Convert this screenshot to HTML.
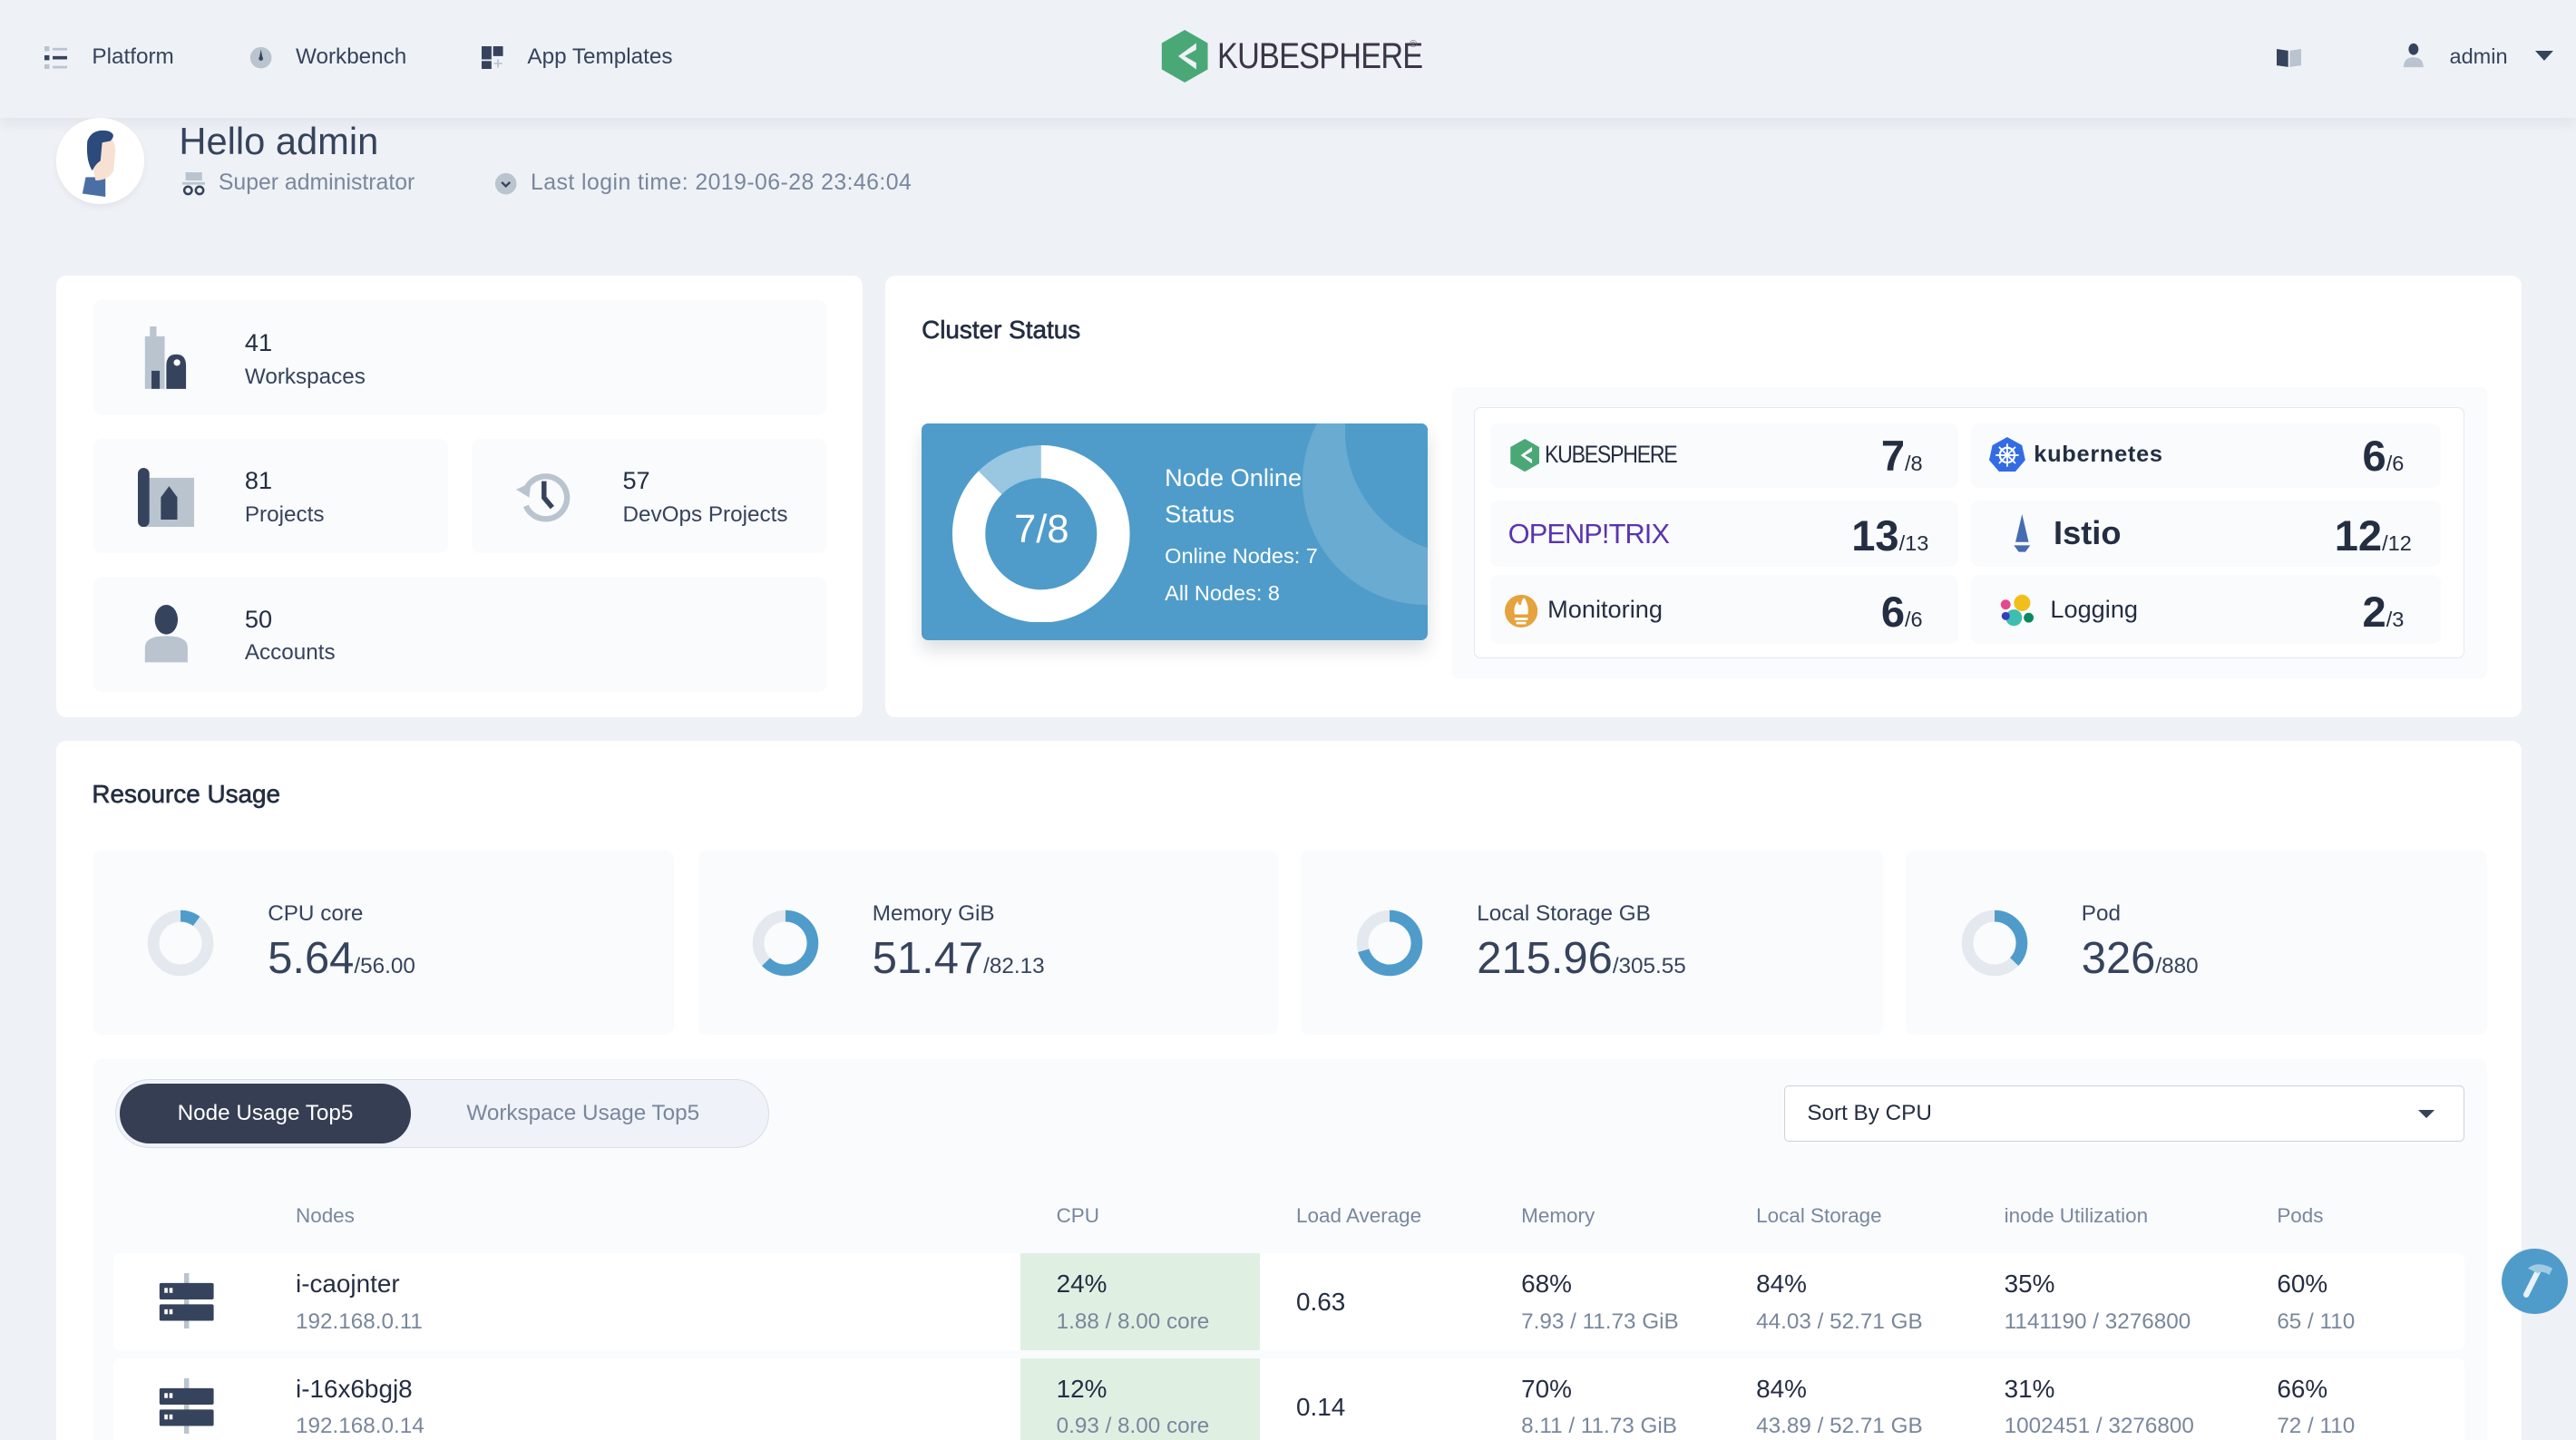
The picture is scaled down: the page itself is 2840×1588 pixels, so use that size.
<!DOCTYPE html>
<html><head><meta charset="utf-8">
<style>
*{box-sizing:border-box;margin:0;padding:0}
html,body{width:2840px;height:1588px;overflow:hidden;background:#eef1f6}
#root{zoom:1.8112;width:1568px;height:877px;position:relative;font-family:"Liberation Sans",sans-serif;color:#242e42;overflow:hidden}
.a{position:absolute}
.hdr{left:0;top:0;width:1568px;height:72px;background:#eef1f6;box-shadow:0 4px 8px rgba(36,46,66,.06)}
.nav{font-size:13.4px;color:#36435c;top:27px}
.card{background:#fff;border-radius:6px}
.tile{background:#f9fbfd;border-radius:5px}
.num{font-size:15px;color:#242e42}
.lbl{font-size:13.4px;color:#36435c}
.big{font-size:26px;color:#242e42;font-weight:bold}
.sm{font-size:13px;font-weight:normal}
.th{font-size:12.4px;color:#79879c;top:733px}
.v{font-size:15.4px;color:#242e42}
.s{font-size:13.4px;color:#79879c}
.ttl{font-size:15.4px;color:#242e42;-webkit-text-stroke:.35px #242e42}
</style></head><body><div id="root">
<div class="a hdr"></div>
<svg class="a" style="left:27px;top:28px" width="14" height="14" viewBox="0 0 14 14"><rect x="0" y="0" width="3" height="3" fill="#b9c4cf"/><rect x="5" y="1" width="9" height="1.5" fill="#b9c4cf"/><rect x="0" y="5.5" width="3" height="3" fill="#36435c"/><rect x="5" y="6" width="9" height="2" fill="#36435c"/><rect x="0" y="11" width="3" height="3" fill="#b9c4cf"/><rect x="5" y="12" width="9" height="1.5" fill="#b9c4cf"/></svg>
<div class="a nav" style="left:56px">Platform</div>
<svg class="a" style="left:152px;top:28px" width="14" height="14" viewBox="0 0 14 14"><circle cx="7" cy="7" r="6.5" fill="#b9c4cf"/><path d="M7 2 L8 7 L6 7Z" fill="#36435c"/><circle cx="7" cy="7.5" r="1.3" fill="#36435c"/></svg>
<div class="a nav" style="left:180px">Workbench</div>
<svg class="a" style="left:293px;top:28px" width="14" height="14" viewBox="0 0 14 14"><rect x="0" y="0" width="6" height="8" fill="#36435c"/><rect x="7" y="0" width="6" height="6" fill="#36435c"/><rect x="0" y="9" width="6" height="5" fill="#36435c"/><path d="M10 8v5M7.5 10.5h5" stroke="#b9c4cf" stroke-width="1"/></svg>
<div class="a nav" style="left:321px">App Templates</div>
<svg class="a" style="left:706px;top:18px" width="30" height="32" viewBox="0 0 30 32"><path d="M15 0 L29 8 L29 24 L15 32 L1 24 L1 8Z" fill="#4aa877"/><path d="M11 16 L22 8 L22 12 L15 16 L22 20 L22 24Z" fill="#eef1f6"/></svg>
<div class="a" style="left:741px;top:22px;font-size:22px;color:#3b3648;letter-spacing:-0.5px;transform:scaleX(.86);transform-origin:0 0;white-space:nowrap">KUBESPHERE</div>
<div class="a" style="left:858px;top:24px;font-size:6px;color:#666">®</div>
<svg class="a" style="left:1386px;top:30px" width="15" height="11" viewBox="0 0 15 11"><path d="M0 0 L7 1 L7 11 L0 10Z" fill="#36435c"/><path d="M8 1 L15 0 L15 10 L8 11Z" fill="#b9c4cf"/></svg>
<svg class="a" style="left:1463px;top:26px" width="12" height="16" viewBox="0 0 12 16"><ellipse cx="6" cy="4" rx="3" ry="3.5" fill="#36435c"/><path d="M0 15 Q0 9 6 9 Q12 9 12 15Z" fill="#b9c4cf"/></svg>
<div class="a" style="left:1491px;top:27px;font-size:13px;color:#36435c">admin</div>
<svg class="a" style="left:1543px;top:31px" width="11" height="6"><path d="M0 0h11L5.5 6Z" fill="#36435c"/></svg>
<div class="a" style="left:34px;top:72px;width:54px;height:52px;border-radius:50%;background:#fff;box-shadow:0 2px 4px rgba(0,0,0,.05)"></div>
<svg class="a" style="left:44px;top:78px" width="34" height="42" viewBox="0 0 34 42"><path d="M8 30 L20 30 L20 42 L6 40Z" fill="#4a6fa5"/><path d="M10 12 Q10 4 18 4 Q26 5 26 14 L25 26 Q22 32 14 32 L12 22Z" fill="#f6e1d3"/><path d="M9 8 Q12 0 22 2 Q27 4 23 8 L18 9 L17 20 Q14 22 12 26 Q8 20 9 8Z" fill="#2c4a7c"/></svg>
<div class="a" style="left:109px;top:73px;font-size:23px;color:#36435c">Hello admin</div>
<svg class="a" style="left:111px;top:105px" width="14" height="14" viewBox="0 0 14 14"><rect x="2" y="0" width="10" height="5" fill="#b9c4cf"/><rect x="0" y="6" width="14" height="1.5" fill="#b9c4cf"/><circle cx="3.5" cy="11" r="2.3" fill="none" stroke="#36435c" stroke-width="1.4"/><circle cx="10.5" cy="11" r="2.3" fill="none" stroke="#36435c" stroke-width="1.4"/></svg>
<div class="a" style="left:133px;top:104px;font-size:13.7px;color:#79879c">Super administrator</div>
<svg class="a" style="left:301px;top:105px" width="14" height="14"><circle cx="7" cy="7" r="6.5" fill="#b9c4cf"/><path d="M4.5 6 L7 8.5 L9.5 6" stroke="#36435c" stroke-width="1.3" fill="none"/></svg>
<div class="a" style="left:323px;top:104px;font-size:13.7px;color:#79879c;letter-spacing:.25px">Last login time: 2019-06-28 23:46:04</div>

<div class="a card" style="left:34px;top:168px;width:491px;height:269px"></div>
<div class="a tile" style="left:57px;top:183px;width:446px;height:70px"></div>
<div class="a tile" style="left:57px;top:267px;width:216px;height:70px"></div>
<div class="a tile" style="left:287px;top:267px;width:216px;height:70px"></div>
<div class="a tile" style="left:57px;top:351px;width:446px;height:70px"></div>
<svg class="a" style="left:87px;top:199px" width="28" height="40" viewBox="0 0 28 40"><rect x="4" y="0" width="4" height="6" fill="#b9c4cf"/><rect x="1" y="6" width="12" height="32" fill="#b9c4cf"/><rect x="5" y="27" width="5" height="11" fill="#36435c"/><path d="M14 38 L14 24 Q14 17 20 17 Q26 17 26 24 L26 38Z" fill="#36435c"/><circle cx="20.5" cy="22" r="2" fill="#fff"/></svg>
<div class="a num" style="left:149px;top:200px">41</div><div class="a lbl" style="left:149px;top:222px">Workspaces</div>
<svg class="a" style="left:84px;top:285px" width="34" height="36" viewBox="0 0 34 36"><rect x="3" y="6" width="32" height="30" fill="#b9c4cf"/><rect x="0" y="0" width="7" height="36" rx="3.5" fill="#36435c"/><path d="M14 14 L19 6 L24 14 L24 30 L14 30Z" transform="translate(0,6) scale(1,0.85)" fill="#36435c"/></svg>
<div class="a num" style="left:149px;top:284px">81</div><div class="a lbl" style="left:149px;top:306px">Projects</div>
<svg class="a" style="left:314px;top:286px" width="34" height="34" viewBox="0 0 34 34"><path d="M6 12 A13 13 0 1 1 6 22" stroke="#b9c4cf" stroke-width="3.5" fill="none"/><path d="M0 12 L9 8 L8 17Z" fill="#b9c4cf"/><path d="M17 7 L17 17 L22 23" stroke="#36435c" stroke-width="3" fill="none"/></svg>
<div class="a num" style="left:379px;top:284px">57</div><div class="a lbl" style="left:379px;top:306px">DevOps Projects</div>
<svg class="a" style="left:87px;top:368px" width="28" height="36" viewBox="0 0 28 36"><ellipse cx="14" cy="9" rx="7" ry="9" fill="#36435c"/><path d="M1 35 L1 26 Q1 19 14 19 Q27 19 27 26 L27 35Z" fill="#b9c4cf"/></svg>
<div class="a num" style="left:149px;top:368px">50</div><div class="a lbl" style="left:149px;top:390px">Accounts</div>

<div class="a card" style="left:539px;top:168px;width:996px;height:269px"></div>
<div class="a ttl" style="left:561px;top:192px">Cluster Status</div>
<div class="a" style="left:561px;top:258px;width:308px;height:132px;background:#4f9cca;border-radius:4px;overflow:hidden;box-shadow:0 6px 10px rgba(36,46,66,.15)">
<div class="a" style="left:232px;top:-40px;width:150px;height:150px;border-radius:50%;background:#6aabd2"></div>
<div class="a" style="left:258px;top:-70px;width:150px;height:150px;border-radius:50%;background:#4f9cca"></div>
</div>
<svg class="a" style="left:580px;top:271px" width="108" height="108" viewBox="0 0 108 108"><circle cx="54" cy="54" r="44" fill="none" stroke="#99c6e1" stroke-width="20"/><circle cx="54" cy="54" r="44" fill="none" stroke="#fff" stroke-width="20" stroke-dasharray="241.9 276.5" transform="rotate(-90 54 54)"/></svg>
<div class="a" style="left:580px;top:309px;width:108px;text-align:center;font-size:24px;color:#fff">7/8</div>
<div class="a" style="left:709px;top:280px;font-size:15px;color:#fff;line-height:22px">Node Online<br>Status</div>
<div class="a" style="left:709px;top:331px;font-size:13px;color:#fff">Online Nodes: 7</div>
<div class="a" style="left:709px;top:354px;font-size:13px;color:#fff">All Nodes: 8</div>
<div class="a" style="left:884px;top:236px;width:630px;height:177px;background:#f9fbfd;border-radius:4px"></div>
<div class="a" style="left:897px;top:248px;width:603px;height:153px;background:#fff;border:1px solid #e3e9ef;border-radius:4px"></div>
<div class="a tile" style="left:907px;top:258px;width:285px;height:39px"></div>
<div class="a tile" style="left:1200px;top:258px;width:286px;height:39px"></div>
<div class="a tile" style="left:907px;top:305px;width:285px;height:40px"></div>
<div class="a tile" style="left:1200px;top:305px;width:286px;height:40px"></div>
<div class="a tile" style="left:907px;top:350px;width:285px;height:42px"></div>
<div class="a tile" style="left:1200px;top:350px;width:286px;height:42px"></div>
<svg class="a" style="left:918px;top:267px" width="20" height="20" viewBox="0 0 30 32"><path d="M15 0 L29 8 L29 24 L15 32 L1 24 L1 8Z" fill="#4aa877"/><path d="M11 16 L22 8 L22 12 L15 16 L22 20 L22 24Z" fill="#fff"/></svg>
<div class="a" style="left:940px;top:268px;font-size:15px;color:#242e42;letter-spacing:-0.8px;transform:scaleX(.85);transform-origin:0 0;white-space:nowrap">KUBESPHERE</div>
<div class="a big" style="left:1145px;top:262px">7<span class="sm">/8</span></div>
<svg class="a" style="left:1211px;top:266px" width="22" height="22" viewBox="0 0 22 22"><path d="M11 0 L20 5 L22 14 L16 21 L6 21 L0 14 L2 5Z" fill="#326ce5"/><circle cx="11" cy="11" r="4.5" fill="none" stroke="#fff" stroke-width="1.2"/><path d="M11 4v14M4 11h14M6 6l10 10M16 6L6 16" stroke="#fff" stroke-width="1"/></svg>
<div class="a" style="left:1238px;top:269px;font-size:14px;font-weight:bold;color:#242e42;letter-spacing:.4px">kubernetes</div>
<div class="a big" style="left:1438px;top:262px">6<span class="sm">/6</span></div>
<div class="a" style="left:918px;top:315px;font-size:17px;color:#5a34b0;letter-spacing:-0.5px">OPENP<span style="color:#5a34b0">!</span>TRIX</div>
<div class="a big" style="left:1127px;top:311px">13<span class="sm">/13</span></div>
<svg class="a" style="left:1222px;top:313px" width="18" height="24" viewBox="0 0 18 24"><path d="M9 0 L13 17 L5 17Z" fill="#466bb0"/><path d="M4 19 L14 19 L11 23 L7 23Z" fill="#466bb0"/></svg>
<div class="a" style="left:1250px;top:313px;font-size:20px;font-weight:bold;color:#242e42">Istio</div>
<div class="a big" style="left:1421px;top:311px">12<span class="sm">/12</span></div>
<svg class="a" style="left:916px;top:361px" width="20" height="22" viewBox="0 0 20 22"><circle cx="10" cy="11" r="10" fill="#e6a23c"/><path d="M6 13 Q5 8 8 5 Q8 8 10 7 Q10 4 12 3 Q15 8 14 13Z" fill="#fff"/><rect x="6" y="15" width="8" height="1.5" fill="#fff"/><rect x="7" y="17.5" width="6" height="1.5" fill="#fff"/></svg>
<div class="a" style="left:942px;top:362px;font-size:15px;color:#242e42">Monitoring</div>
<div class="a big" style="left:1145px;top:357px">6<span class="sm">/6</span></div>
<svg class="a" style="left:1217px;top:361px" width="22" height="22" viewBox="0 0 22 22"><circle cx="14" cy="6" r="5" fill="#f0bf1a"/><circle cx="9" cy="15" r="5" fill="#3ebeb0"/><circle cx="4" cy="7" r="3" fill="#e8478b"/><circle cx="18" cy="15" r="3" fill="#0d8763"/><circle cx="4" cy="14" r="2.5" fill="#353ebe"/></svg>
<div class="a" style="left:1248px;top:362px;font-size:15px;color:#242e42">Logging</div>
<div class="a big" style="left:1438px;top:357px">2<span class="sm">/3</span></div>

<div class="a card" style="left:34px;top:451px;width:1501px;height:440px"></div>
<div class="a ttl" style="left:56px;top:475px">Resource Usage</div>
<div class="a tile" style="left:57px;top:518px;width:353px;height:112px"></div>
<div class="a tile" style="left:425px;top:518px;width:353px;height:112px"></div>
<div class="a tile" style="left:792px;top:518px;width:354px;height:112px"></div>
<div class="a tile" style="left:1160px;top:518px;width:354px;height:112px"></div>
<svg class="a" style="left:89px;top:553px" width="42" height="42" viewBox="0 0 42 42"><circle cx="21" cy="21" r="16.5" fill="none" stroke="#e3e9ef" stroke-width="7"/><circle cx="21" cy="21" r="16.5" fill="none" stroke="#4f9cca" stroke-width="7" stroke-dasharray="10.4 103.7" transform="rotate(-90 21 21)"/></svg>
<div class="a" style="left:163px;top:549px;font-size:13.4px;color:#36435c">CPU core</div>
<div class="a" style="left:163px;top:568px;font-size:27px;color:#36435c">5.64<span style="font-size:13.4px">/56.00</span></div>
<svg class="a" style="left:457px;top:553px" width="42" height="42" viewBox="0 0 42 42"><circle cx="21" cy="21" r="16.5" fill="none" stroke="#e3e9ef" stroke-width="7"/><circle cx="21" cy="21" r="16.5" fill="none" stroke="#4f9cca" stroke-width="7" stroke-dasharray="65 103.7" transform="rotate(-90 21 21)"/></svg>
<div class="a" style="left:531px;top:549px;font-size:13.4px;color:#36435c">Memory GiB</div>
<div class="a" style="left:531px;top:568px;font-size:27px;color:#36435c">51.47<span style="font-size:13.4px">/82.13</span></div>
<svg class="a" style="left:825px;top:553px" width="42" height="42" viewBox="0 0 42 42"><circle cx="21" cy="21" r="16.5" fill="none" stroke="#e3e9ef" stroke-width="7"/><circle cx="21" cy="21" r="16.5" fill="none" stroke="#4f9cca" stroke-width="7" stroke-dasharray="73 103.7" transform="rotate(-90 21 21)"/></svg>
<div class="a" style="left:899px;top:549px;font-size:13.4px;color:#36435c">Local Storage GB</div>
<div class="a" style="left:899px;top:568px;font-size:27px;color:#36435c">215.96<span style="font-size:13.4px">/305.55</span></div>
<svg class="a" style="left:1193px;top:553px" width="42" height="42" viewBox="0 0 42 42"><circle cx="21" cy="21" r="16.5" fill="none" stroke="#e3e9ef" stroke-width="7"/><circle cx="21" cy="21" r="16.5" fill="none" stroke="#4f9cca" stroke-width="7" stroke-dasharray="38.4 103.7" transform="rotate(-90 21 21)"/></svg>
<div class="a" style="left:1267px;top:549px;font-size:13.4px;color:#36435c">Pod</div>
<div class="a" style="left:1267px;top:568px;font-size:27px;color:#36435c">326<span style="font-size:13.4px">/880</span></div>

<div class="a" style="left:57px;top:645px;width:1457px;height:240px;background:#f9fbfd;border-radius:5px"></div>
<div class="a" style="left:70px;top:657px;width:398px;height:42px;background:#eff2f8;border:1px solid #d8dee5;border-radius:21px"></div>
<div class="a" style="left:73px;top:660px;width:177px;height:36px;background:#363e53;border-radius:18px"></div>
<div class="a" style="left:73px;top:670px;width:177px;text-align:center;font-size:13.4px;color:#fff">Node Usage Top5</div>
<div class="a" style="left:284px;top:670px;font-size:13.4px;color:#79879c">Workspace Usage Top5</div>
<div class="a" style="left:1086px;top:661px;width:414px;height:34px;background:#fff;border:1px solid #ccd3db;border-radius:3px"></div>
<div class="a" style="left:1100px;top:670px;font-size:13.4px;color:#242e42">Sort By CPU</div>
<svg class="a" style="left:1472px;top:676px" width="10" height="5"><path d="M0 0h10L5 5Z" fill="#36435c"/></svg>

<div class="a th" style="left:180px">Nodes</div><div class="a th" style="left:643px">CPU</div><div class="a th" style="left:789px">Load Average</div><div class="a th" style="left:926px">Memory</div><div class="a th" style="left:1069px">Local Storage</div><div class="a th" style="left:1220px">inode Utilization</div><div class="a th" style="left:1386px">Pods</div>

<div class="a" style="left:69px;top:763px;width:1431px;height:59px;background:#fff;border-radius:4px"></div>
<div class="a" style="left:621px;top:763px;width:146px;height:59px;background:#dff0e3"></div>
<div class="a" style="left:69px;top:827px;width:1431px;height:60px;background:#fff;border-radius:4px"></div>
<div class="a" style="left:621px;top:827px;width:146px;height:60px;background:#dff0e3"></div>

<svg class="a" style="left:96px;top:775px" width="36" height="34" viewBox="0 0 36 34"><rect x="16" y="0" width="3" height="34" fill="#b9c4cf"/><rect x="1" y="6" width="33" height="10" rx="1" fill="#36435c"/><rect x="1" y="19" width="33" height="10" rx="1" fill="#36435c"/><rect x="4" y="9" width="2" height="3" fill="#fff"/><rect x="7" y="9" width="2" height="3" fill="#fff"/><rect x="4" y="22" width="2" height="3" fill="#fff"/><rect x="7" y="22" width="2" height="3" fill="#fff"/></svg>
<svg class="a" style="left:96px;top:839px" width="36" height="34" viewBox="0 0 36 34"><rect x="16" y="0" width="3" height="34" fill="#b9c4cf"/><rect x="1" y="6" width="33" height="10" rx="1" fill="#36435c"/><rect x="1" y="19" width="33" height="10" rx="1" fill="#36435c"/><rect x="4" y="9" width="2" height="3" fill="#fff"/><rect x="7" y="9" width="2" height="3" fill="#fff"/><rect x="4" y="22" width="2" height="3" fill="#fff"/><rect x="7" y="22" width="2" height="3" fill="#fff"/></svg>

<div class="a v" style="left:180px;top:773px">i-caojnter</div><div class="a s" style="left:180px;top:797px">192.168.0.11</div>
<div class="a v" style="left:643px;top:773px">24%</div><div class="a s" style="left:643px;top:797px">1.88 / 8.00 core</div>
<div class="a v" style="left:789px;top:784px">0.63</div>
<div class="a v" style="left:926px;top:773px">68%</div><div class="a s" style="left:926px;top:797px">7.93 / 11.73 GiB</div>
<div class="a v" style="left:1069px;top:773px">84%</div><div class="a s" style="left:1069px;top:797px">44.03 / 52.71 GB</div>
<div class="a v" style="left:1220px;top:773px">35%</div><div class="a s" style="left:1220px;top:797px">1141190 / 3276800</div>
<div class="a v" style="left:1386px;top:773px">60%</div><div class="a s" style="left:1386px;top:797px">65 / 110</div>

<div class="a v" style="left:180px;top:837px">i-16x6bgj8</div><div class="a s" style="left:180px;top:861px">192.168.0.14</div>
<div class="a v" style="left:643px;top:837px">12%</div><div class="a s" style="left:643px;top:861px">0.93 / 8.00 core</div>
<div class="a v" style="left:789px;top:848px">0.14</div>
<div class="a v" style="left:926px;top:837px">70%</div><div class="a s" style="left:926px;top:861px">8.11 / 11.73 GiB</div>
<div class="a v" style="left:1069px;top:837px">84%</div><div class="a s" style="left:1069px;top:861px">43.89 / 52.71 GB</div>
<div class="a v" style="left:1220px;top:837px">31%</div><div class="a s" style="left:1220px;top:861px">1002451 / 3276800</div>
<div class="a v" style="left:1386px;top:837px">66%</div><div class="a s" style="left:1386px;top:861px">72 / 110</div>

<div class="a" style="left:1523px;top:760px;width:40px;height:40px;border-radius:50%;background:#4f9cca"></div>
<svg class="a" style="left:1523px;top:760px" width="40" height="40" viewBox="0 0 40 40"><path d="M23 12 L15 28" stroke="#e8f2f8" stroke-width="3.5" stroke-linecap="round"/><path d="M16 12 Q22 7 31 12 L29 16 Q25 13 22 15Z" fill="#9fcbe4"/></svg>
</div></body></html>
